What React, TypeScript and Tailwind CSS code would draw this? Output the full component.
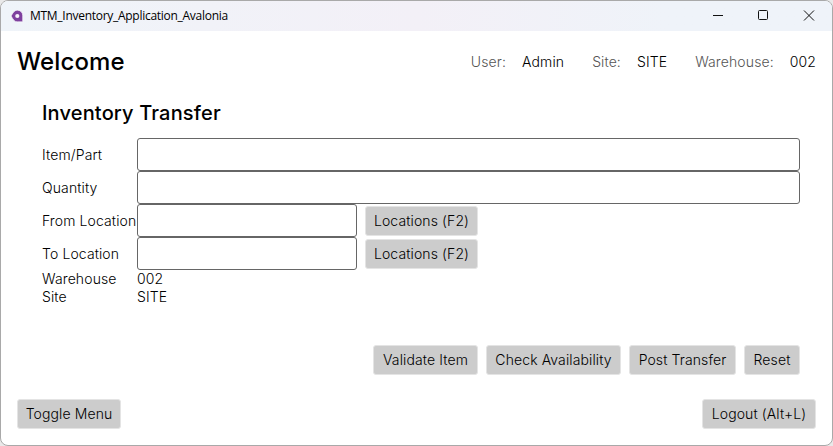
const Btn = ({ children, w }: { children: string; w: string }) => (
  <button className={`h-[30px] shrink-0 whitespace-nowrap rounded-[3px] border border-[#e4e4e4] bg-[#cccccc] text-center ${w}`}>{children}</button>
);
const Field = ({ w = 'flex-1' }: { w?: string }) => (
  <input className={`h-[33px] rounded-[3px] border border-[#666666] bg-white px-2 outline-none ${w}`} />
);
const Label = ({ children }: { children: string }) => (
  <span className="w-[95px] shrink-0 whitespace-nowrap">{children}</span>
);

export default function App() {
  return (
    <div className="bg-[#e9e9e9]">
    <div className="flex h-[446px] w-[833px] flex-col overflow-hidden rounded-lg border border-[#a9a9a9] bg-white font-['Inter',sans-serif] text-[14px] leading-[18px] font-light tracking-[0.008em] text-black">
      <header className="flex h-[30px] shrink-0 items-center bg-linear-to-r from-[#eff4f9] via-[#f3f0f7] via-50% to-[#eff3f9] to-80% pl-[9px] font-normal tracking-normal">
        <svg width="14" height="14" viewBox="0 0 14 14"><path d="M7.5 1.2C4.3 1.2 3.2 3.5 1.1 7c2.1 3.5 3.2 5.8 6.4 5.8h5.2V6.7A5.3 5.3 0 0 0 7.5 1.2Z" fill="#7e409e" stroke="#fff" strokeWidth=".6" /><circle cx="7.3" cy="7" r="2.1" fill="#f7f0fa" /></svg>
        <span className="ml-[6px] font-['Open_Sans',sans-serif] text-[12px] tracking-[-0.28px]">MTM_Inventory_Application_Avalonia</span>
        <svg className="ml-auto" width="138" height="30" fill="none" stroke="#111"><path d="M19 14.5h10M110 9.5l10 10M120 9.5l-10 10" /><rect x="64.5" y="9.5" width="9" height="9" rx="1" /></svg>
      </header>
      <div className="flex h-[62px] shrink-0 items-center justify-between px-4">
        <h1 className="text-[24px] font-medium tracking-[0.006em]">Welcome</h1>
        <div className="flex">
          <span className="text-[#555]">User:</span><span className="ml-4">Admin</span>
          <span className="ml-7 text-[#555]">Site:</span><span className="ml-4">SITE</span>
          <span className="ml-7 text-[#555]">Warehouse:</span><span className="ml-4">002</span>
        </div>
      </div>
      <main className="flex flex-col pl-[41px] pr-8">
        <h2 className="mt-[8px] mb-[12px] text-[20px] leading-[25px] font-medium tracking-[0.008em]">Inventory Transfer</h2>
        <div className="flex items-center"><Label>Item/Part</Label><Field /></div>
        <div className="flex items-center"><Label>Quantity</Label><Field /></div>
        <div className="flex items-center"><Label>From Location</Label><Field w="w-[220px] mr-2" /><Btn w="w-[113px]">Locations (F2)</Btn></div>
        <div className="flex items-center"><Label>To Location</Label><Field w="w-[220px] mr-2" /><Btn w="w-[113px]">Locations (F2)</Btn></div>
        <div className="flex"><Label>Warehouse</Label><span>002</span></div>
        <div className="flex"><Label>Site</Label><span>SITE</span></div>
        <div className="mt-[39px] flex justify-end gap-2">
          <Btn w="w-[105px]">Validate Item</Btn><Btn w="w-[135px]">Check Availability</Btn><Btn w="w-[107px]">Post Transfer</Btn><Btn w="w-[56px]">Reset</Btn>
        </div>
      </main>
      <footer className="mt-[24px] flex justify-between px-4"><Btn w="w-[104px]">Toggle Menu</Btn><Btn w="w-[114px]">Logout (Alt+L)</Btn></footer>
    </div>
    </div>
  );
}
